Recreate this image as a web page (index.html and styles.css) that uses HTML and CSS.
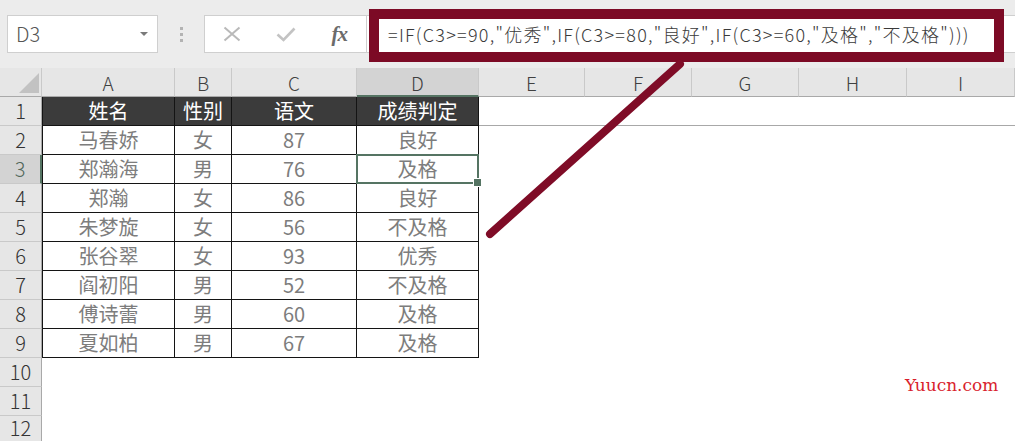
FILE: index.html
```html
<!DOCTYPE html>
<html lang="zh-CN">
<head>
<meta charset="utf-8">
<title>Excel IF</title>
<link rel="stylesheet" href="styles.css">
</head>
<body>
<div class="app">
  <div class="toolbar">
    <div class="namebox">
      <span class="nb-text">D3</span>
      <span class="nb-arrow"></span>
    </div>
    <div class="dots"><i></i><i></i><i></i></div>
    <div class="fxbox">
      <span class="slot">
        <svg width="18" height="16" viewBox="0 0 18 16"><path d="M1.5 1.5 L16.5 14.5 M16.5 1.5 L1.5 14.5" stroke="#b9b9b9" stroke-width="2" fill="none"/></svg>
      </span>
      <span class="slot">
        <svg width="20" height="15" viewBox="0 0 20 15"><path d="M1.5 7.5 L7.5 13 L18.5 1.5" stroke="#c3c3c3" stroke-width="2.6" fill="none"/></svg>
      </span>
      <span class="slot fx">fx</span>
    </div>
    <div class="formula">=IF(C3&gt;=90,"优秀",IF(C3&gt;=80,"良好",IF(C3&gt;=60,"及格","不及格")))</div>
  </div>

  <div class="sheet">
    <div class="corner"><span class="tri"></span></div>
    <div class="ch">A</div><div class="ch">B</div><div class="ch">C</div><div class="ch sel">D</div><div class="ch">E</div><div class="ch">F</div><div class="ch">G</div><div class="ch">H</div><div class="ch">I</div>

    <div class="rh">1</div>
    <div class="t hd first">姓名</div><div class="t hd">性别</div><div class="t hd">语文</div><div class="t hd">成绩判定</div>
    <div class="c line"></div><div class="c line"></div><div class="c line"></div><div class="c line"></div><div class="c line"></div>

    <div class="rh">2</div>
    <div class="t first">马春娇</div><div class="t">女</div><div class="t">87</div><div class="t">良好</div>
    <div class="c"></div><div class="c"></div><div class="c"></div><div class="c"></div><div class="c"></div>

    <div class="rh sel">3</div>
    <div class="t first">郑瀚海</div><div class="t">男</div><div class="t">76</div><div class="t active">及格</div>
    <div class="c"></div><div class="c"></div><div class="c"></div><div class="c"></div><div class="c"></div>

    <div class="rh">4</div>
    <div class="t first">郑瀚</div><div class="t">女</div><div class="t">86</div><div class="t">良好</div>
    <div class="c"></div><div class="c"></div><div class="c"></div><div class="c"></div><div class="c"></div>

    <div class="rh">5</div>
    <div class="t first">朱梦旋</div><div class="t">女</div><div class="t">56</div><div class="t">不及格</div>
    <div class="c"></div><div class="c"></div><div class="c"></div><div class="c"></div><div class="c"></div>

    <div class="rh">6</div>
    <div class="t first">张谷翠</div><div class="t">女</div><div class="t">93</div><div class="t">优秀</div>
    <div class="c"></div><div class="c"></div><div class="c"></div><div class="c"></div><div class="c"></div>

    <div class="rh">7</div>
    <div class="t first">阎初阳</div><div class="t">男</div><div class="t">52</div><div class="t">不及格</div>
    <div class="c"></div><div class="c"></div><div class="c"></div><div class="c"></div><div class="c"></div>

    <div class="rh">8</div>
    <div class="t first">傅诗蕾</div><div class="t">男</div><div class="t">60</div><div class="t">及格</div>
    <div class="c"></div><div class="c"></div><div class="c"></div><div class="c"></div><div class="c"></div>

    <div class="rh">9</div>
    <div class="t first">夏如柏</div><div class="t">男</div><div class="t">67</div><div class="t">及格</div>
    <div class="c"></div><div class="c"></div><div class="c"></div><div class="c"></div><div class="c"></div>

    <div class="rh">10</div>
    <div class="c"></div><div class="c"></div><div class="c"></div><div class="c"></div><div class="c"></div><div class="c"></div><div class="c"></div><div class="c"></div><div class="c"></div>

    <div class="rh">11</div>
    <div class="c"></div><div class="c"></div><div class="c"></div><div class="c"></div><div class="c"></div><div class="c"></div><div class="c"></div><div class="c"></div><div class="c"></div>

    <div class="rh last">12</div>
    <div class="c"></div><div class="c"></div><div class="c"></div><div class="c"></div><div class="c"></div><div class="c"></div><div class="c"></div><div class="c"></div><div class="c"></div>
  </div>

  <svg class="annot" width="1015" height="441" viewBox="0 0 1015 441">
    <rect x="374" y="14" width="625" height="43" fill="none" stroke="#7c0a25" stroke-width="10"/>
    <line x1="490" y1="234" x2="680" y2="64" stroke="#7f0c27" stroke-width="8" stroke-linecap="round"/>
  </svg>

  <div class="watermark">Yuucn.com</div>
</div>
</body>
</html>
```

FILE: styles.css
```css
* { box-sizing: border-box; }
html, body {
  margin: 0;
  padding: 0;
  background: #ffffff;
  overflow: hidden;
}
body {
  width: 1015px;
  height: 441px;
  font-family: "Noto Sans CJK SC", "Noto Sans", sans-serif;
}
.app {
  position: relative;
  width: 1015px;
  height: 441px;
  overflow: hidden;
}

/* toolbar */
.toolbar {
  height: 68px;
  background: #ececec;
  display: flex;
  align-items: flex-start;
  padding-top: 15px;
}
.namebox {
  margin-left: 7px;
  width: 151px;
  height: 38px;
  background: #fff;
  border: 1px solid #cfcfcf;
  display: flex;
  align-items: center;
  justify-content: space-between;
  padding: 0 8px 0 8px;
}
.nb-text {
  font-size: 20px;
  font-weight: 300;
  color: #555;
  line-height: 1;
}
.nb-arrow {
  width: 0;
  height: 0;
  border-left: 4px solid transparent;
  border-right: 4px solid transparent;
  border-top: 4px solid #7a7a7a;
  margin-right: 1px;
}
.dots {
  width: 46px;
  height: 38px;
  display: flex;
  flex-direction: column;
  align-items: center;
  justify-content: center;
  gap: 3px;
}
.dots i {
  display: block;
  width: 3px;
  height: 3px;
  background: #b3b3b3;
}
.fxbox {
  width: 163px;
  height: 38px;
  background: #fff;
  border: 1px solid #cfcfcf;
  display: flex;
  align-items: center;
}
.slot {
  width: 54px;
  display: flex;
  align-items: center;
  justify-content: center;
}
.fx {
  font-family: "Liberation Serif", "DejaVu Serif", serif;
  font-style: italic;
  font-weight: bold;
  font-size: 21px;
  color: #6b6b6b;
  line-height: 1;
  letter-spacing: -1px;
}
.formula {
  flex: 1;
  height: 38px;
  background: #fff;
  border-top: 1px solid #cfcfcf;
  border-bottom: 1px solid #cfcfcf;
  padding-left: 21px;
  font-size: 18px;
  font-weight: 300;
  letter-spacing: 1.25px;
  color: #3a3a3a;
  line-height: 36px;
  white-space: nowrap;
}

/* sheet */
.sheet {
  display: grid;
  grid-template-columns: 42px 133px 57px 125px 122px 106px 107px 107px 108px 108px;
  grid-template-rows: repeat(12, 29px) 25px;
}
.corner {
  background: #e6e6e6;
  border-right: 1px solid #c9c9c9;
  border-bottom: 1px solid #a9a9a9;
  display: flex;
  align-items: flex-end;
  justify-content: flex-end;
  padding: 0 2px 3px 0;
}
.tri {
  width: 0;
  height: 0;
  border-left: 20px solid transparent;
  border-bottom: 20px solid #c2c2c2;
}
.ch {
  background: #e6e6e6;
  border-right: 1px solid #c9c9c9;
  border-bottom: 1px solid #a9a9a9;
  text-align: center;
  font-size: 19px;
  font-weight: 300;
  color: #404040;
  line-height: 30px;
}
.ch.sel {
  background: #d3d3d3;
  border-bottom: 2px solid #557463;
}
.rh {
  background: #e6e6e6;
  border-right: 1px solid #a9a9a9;
  border-bottom: 1px solid #c9c9c9;
  text-align: center;
  font-size: 20px;
  font-weight: 300;
  color: #333;
  line-height: 28px;
}
.rh.last {
  line-height: 24px;
  border-bottom: 0;
}
.rh.sel {
  background: #d3d3d3;
  border-right: 2px solid #557463;
  color: #50665a;
}
.c { background: #fff; }
.c.line { border-bottom: 1px solid #a8a8a8; }
.t {
  background: #fff;
  border-right: 1px solid #141414;
  border-bottom: 1px solid #141414;
  text-align: center;
  font-size: 20px;
  color: #7d7d7d;
  line-height: 28px;
}
.t.first { border-left: 1px solid #141414; }
.t.hd {
  background: #3b3b3b;
  color: #ffffff;
}
.t.active { position: relative; }
.t.active::after {
  content: "";
  position: absolute;
  top: -1px;
  left: -1px;
  right: -1px;
  bottom: -1px;
  border: 2px solid #557463;
}
.t.active::before {
  content: "";
  position: absolute;
  right: -4px;
  bottom: -4px;
  width: 7px;
  height: 7px;
  background: #557463;
  border: 1px solid #fff;
  z-index: 2;
}

/* overlays */
.annot {
  position: absolute;
  top: 0;
  left: 0;
  pointer-events: none;
}
.watermark {
  position: absolute;
  left: 905px;
  top: 377px;
  font-family: "DejaVu Serif", "Liberation Serif", serif;
  font-size: 17px;
  line-height: 17px;
  color: #d91f2e;
}
```
